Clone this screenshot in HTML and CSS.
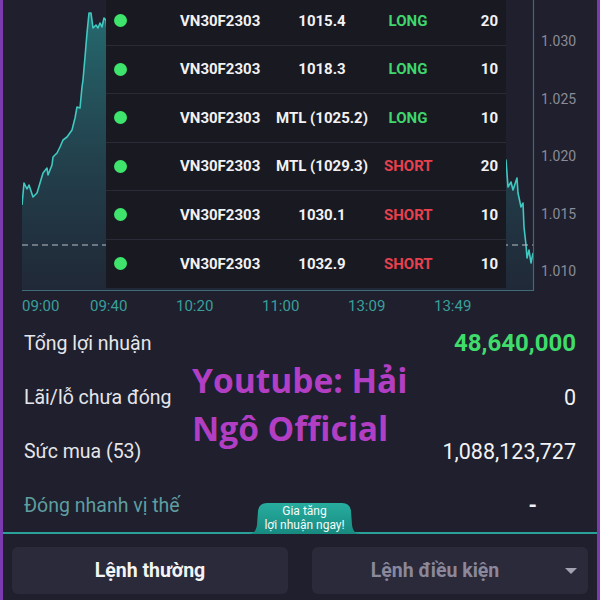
FILE: index.html
```html
<!DOCTYPE html>
<html lang="vi">
<head>
<meta charset="utf-8">
<link rel="stylesheet" href="styles.css">
</head>
<body>
<div class="screen">
  <section class="chart">
    <svg class="plot" width="513" height="292" viewBox="0 0 513 292">
      <defs>
        <linearGradient id="fillg" x1="0" y1="0" x2="0" y2="1">
          <stop offset="0" stop-color="#2aa7a4" stop-opacity="0.55"/>
          <stop offset="1" stop-color="#2a6f80" stop-opacity="0.12"/>
        </linearGradient>
      </defs>
      <path fill="url(#fillg)" d="M0 205 L2 183 L5 189 L7 185 L11 197 L15 193 L18 183 L21 173 L25 168 L26 175 L30 165 L31 157 L35 153 L38 147 L41 140 L45 137 L50 130 L53 118 L55 107 L58 108 L60 87 L61 80 L63 57 L65 33 L67 13 L69 13 L71 28 L74 25 L76 28 L78 23 L80 27 L82 18 L84 20 L86 40 L484 160 L486 187 L489 182 L491 190 L495 178 L496 193 L499 207 L501 203 L502 227 L504 245 L505 258 L507 250 L509 263 L511 253 L511 290 L0 290 Z"/>
      <path fill="none" stroke="#3fc9c0" stroke-width="1.6" stroke-linejoin="round" d="M0 205 L2 183 L5 189 L7 185 L11 197 L15 193 L18 183 L21 173 L25 168 L26 175 L30 165 L31 157 L35 153 L38 147 L41 140 L45 137 L50 130 L53 118 L55 107 L58 108 L60 87 L61 80 L63 57 L65 33 L67 13 L69 13 L71 28 L74 25 L76 28 L78 23 L80 27 L82 18 L84 20 L86 40 L484 160 L486 187 L489 182 L491 190 L495 178 L496 193 L499 207 L501 203 L502 227 L504 245 L505 258 L507 250 L509 263 L511 253"/>
      <line x1="0" y1="245" x2="511" y2="245" stroke="#b9bfc8" stroke-width="1" stroke-dasharray="6 4"/>
      <line x1="511.5" y1="0" x2="511.5" y2="291" stroke="#3d6c78" stroke-width="1.2"/>
      <line x1="0" y1="290.5" x2="512" y2="290.5" stroke="#3d6c78" stroke-width="1.2"/>
    </svg>
    <div class="axis">
      <span class="tick">1.030</span>
      <span class="tick">1.025</span>
      <span class="tick">1.020</span>
      <span class="tick">1.015</span>
      <span class="tick">1.010</span>
    </div>
    <div class="orders">
      <div class="row"><span class="dot"></span><span class="sym">VN30F2303</span><span class="price">1015.4</span><span class="side long">LONG</span><span class="qty">20</span></div>
      <div class="row"><span class="dot"></span><span class="sym">VN30F2303</span><span class="price">1018.3</span><span class="side long">LONG</span><span class="qty">10</span></div>
      <div class="row"><span class="dot"></span><span class="sym">VN30F2303</span><span class="price">MTL (1025.2)</span><span class="side long">LONG</span><span class="qty">10</span></div>
      <div class="row"><span class="dot"></span><span class="sym">VN30F2303</span><span class="price">MTL (1029.3)</span><span class="side short">SHORT</span><span class="qty">20</span></div>
      <div class="row"><span class="dot"></span><span class="sym">VN30F2303</span><span class="price">1030.1</span><span class="side short">SHORT</span><span class="qty">10</span></div>
      <div class="row last"><span class="dot"></span><span class="sym">VN30F2303</span><span class="price">1032.9</span><span class="side short">SHORT</span><span class="qty">10</span></div>
    </div>
  </section>
  <div class="times">
    <span>09:00</span><span>09:40</span><span>10:20</span><span>11:00</span><span>13:09</span><span>13:49</span>
  </div>
  <section class="stats">
    <div class="stat"><span class="label">Tổng lợi nhuận</span><span class="value profit">48,640,000</span></div>
    <div class="stat"><span class="label">Lãi/lỗ chưa đóng</span><span class="value">0</span></div>
    <div class="stat"><span class="label">Sức mua (53)</span><span class="value">1,088,123,727</span></div>
    <div class="stat"><span class="label quick">Đóng nhanh vị thế</span><span class="value dash">-</span></div>
    <div class="watermark">Youtube: Hải<br>Ngô Official</div>
  </section>
  <div class="divider">
    <div class="tab">
      <svg class="tab-bg" width="115" height="31" viewBox="0 0 115 31">
        <defs>
          <linearGradient id="tabg" x1="0" y1="0" x2="0" y2="1">
            <stop offset="0" stop-color="#27ad9f"/>
            <stop offset="1" stop-color="#188a80"/>
          </linearGradient>
        </defs>
        <path fill="url(#tabg)" d="M0 31 C7 31 9 28 10 22 L11 8 Q12 0 20 0 L95 0 Q103 0 104 8 L105 22 C106 28 108 31 115 31 Z"/>
      </svg>
      <span class="tab-text">Gia tăng<br>lợi nhuận ngay!</span>
    </div>
  </div>
  <footer class="footer">
    <button class="btn active">Lệnh thường</button>
    <button class="btn muted">Lệnh điều kiện<span class="caret"></span></button>
  </footer>
</div>
</body>
</html>
```
FILE: styles.css
```css
* { box-sizing: border-box; }
html, body { margin: 0; padding: 0; }
body {
  background: #1f1f2d;
  font-family: Roboto, "Noto Sans", "DejaVu Sans", sans-serif;
  color: #e6e6ea;
}
.screen {
  width: 600px;
  height: 600px;
  overflow: hidden;
  background: #1f1f2d;
  border-left: 3px solid #7b3bb0;
  border-right: 3px solid #7b3bb0;
  display: flex;
  flex-direction: column;
}
.chart {
  position: relative;
  height: 292px;
  flex: none;
  display: flex;
  padding-left: 19px;
}
.plot { display: block; flex: none; }
.axis {
  display: flex;
  flex-direction: column;
  padding-top: 31px;
  padding-left: 6px;
}
.tick {
  flex: none;
  height: 57.5px;
  line-height: 20px;
  font-size: 14px;
  color: #8b8b97;
}
.orders {
  position: absolute;
  left: 103px;
  top: -3px;
  width: 400px;
  background: #191922;
}
.row {
  height: 48.5px;
  display: grid;
  grid-template-columns: 66px 80px 124px 48px 1fr;
  align-items: center;
  padding: 0 8px;
  border-bottom: 1px solid #2b2b38;
  font-size: 15px;
  font-weight: 700;
  color: #f2f2f4;
}
.row.last { border-bottom: none; }
.dot {
  width: 13px;
  height: 13px;
  border-radius: 50%;
  background: #3ee46b;
}
.sym { white-space: nowrap; }
.price { text-align: center; white-space: nowrap; }
.side { text-align: center; }
.long { color: #3fd66d; }
.short { color: #e6414e; }
.qty { text-align: right; }
.times {
  height: 24px;
  flex: none;
  display: grid;
  grid-template-columns: 68px repeat(5, 86px);
  padding-left: 19px;
  font-size: 15px;
  line-height: 28px;
  color: #3a9f9b;
}
.stats {
  position: relative;
  flex: none;
  padding: 0 21px;
}
.stat {
  height: 54px;
  display: flex;
  align-items: center;
  justify-content: space-between;
}
.label { font-size: 19.5px; color: #e6e6ea; }
.label.quick { color: #5e9ea0; }
.value { font-size: 21.5px; color: #f2f2f4; }
.value.profit { font-size: 24px; font-weight: 700; color: #3fdc6b; }
.value.dash { margin-right: 39px; font-weight: 700; }
.watermark {
  position: absolute;
  left: 189px;
  top: 40px;
  font-family: "Open Sans", "Noto Sans", sans-serif;
  font-weight: 700;
  font-size: 33.5px;
  line-height: 48px;
  color: #b23ec4;
}
.divider {
  position: relative;
  flex: none;
  height: 2px;
  background: #2aa198;
}
.tab {
  position: absolute;
  left: 244px;
  bottom: 0;
  width: 115px;
  height: 31px;
}
.tab-bg { position: absolute; left: 0; top: 0; }
.tab-text {
  position: relative;
  display: block;
  text-align: center;
  padding-top: 2px;
  font-size: 12px;
  line-height: 13.5px;
  color: #f4fbfa;
  white-space: nowrap;
}
.footer {
  flex: 1;
  display: grid;
  grid-template-columns: 1fr 1fr;
  gap: 24px;
  padding: 13px 9px 0 9px;
  align-items: start;
}
.btn {
  min-width: 0;
  height: 47px;
  border: none;
  border-radius: 6px;
  background: #2a2a3a;
  font-family: Roboto, "Noto Sans", sans-serif;
  font-size: 19.5px;
  font-weight: 700;
  position: relative;
}
.btn.active { color: #f4f4f6; }
.btn.muted { color: #8a889a; padding-right: 36px; }
.caret {
  position: absolute;
  right: 11px;
  top: 21px;
  width: 0;
  height: 0;
  border-left: 6px solid transparent;
  border-right: 6px solid transparent;
  border-top: 6px solid #a2a2b0;
}
```
